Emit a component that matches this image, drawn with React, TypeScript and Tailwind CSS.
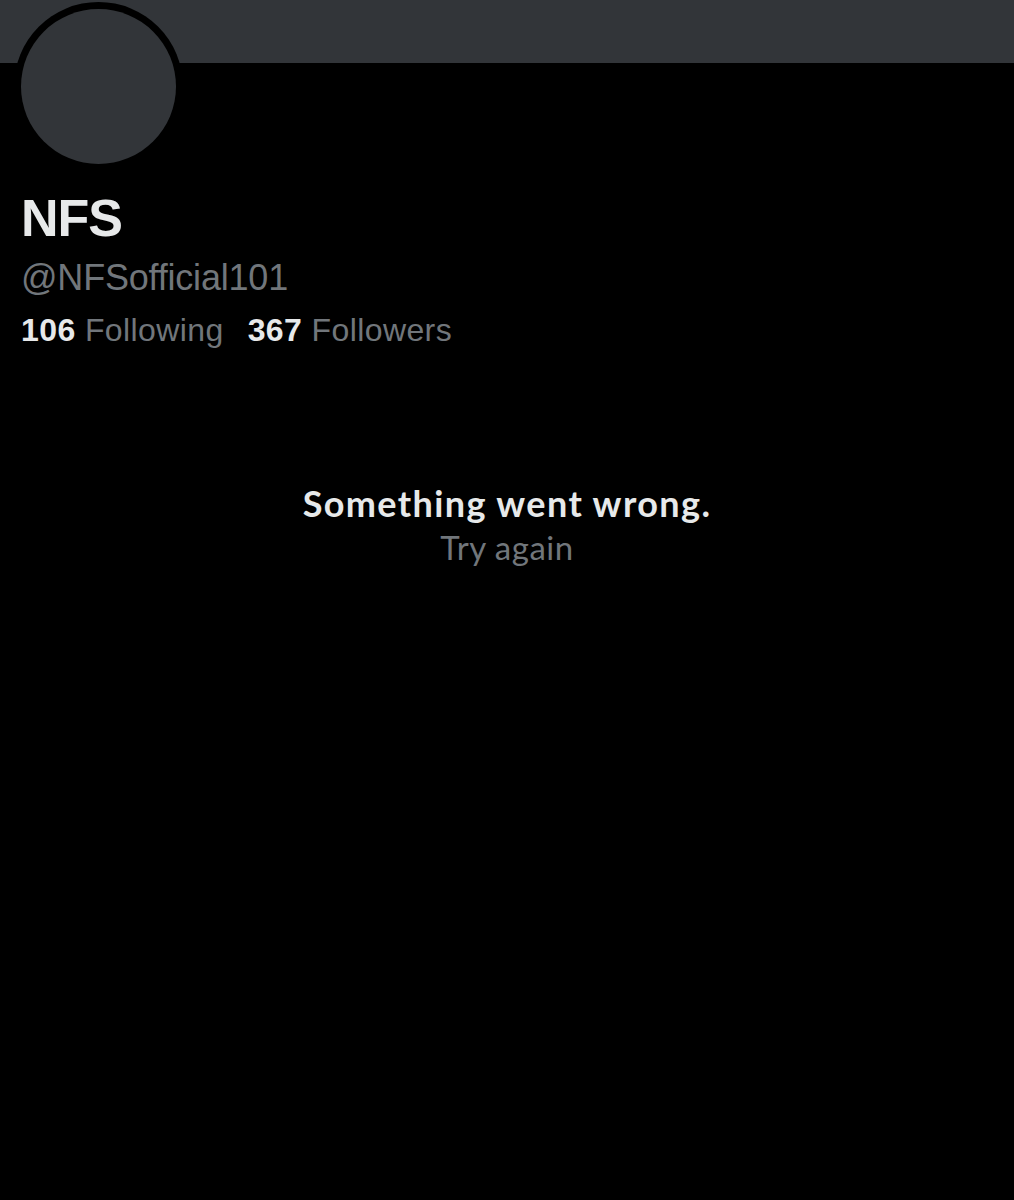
export default function App() {
  return (
    <div className="min-h-[1200px] w-full bg-black font-['Liberation_Sans',Arial,sans-serif]">
      {/* banner */}
      <div className="h-[63px] w-full bg-[#323539]" />

      {/* avatar */}
      <div className="-mt-[61px] ml-[14px] h-[169px] w-[169px] rounded-full bg-black p-[7px]">
        <div className="h-full w-full rounded-full bg-[#323539]" />
      </div>

      {/* profile info */}
      <div className="px-[21px]">
        <h1 className="mt-[17px] text-[52px] font-bold leading-[60px] tracking-[-1px] text-[#e7e9ea]">
          NFS
        </h1>
        <div className="mt-[6px] text-[36px] leading-[48px] tracking-[-0.2px] text-[#71767b]">
          @NFSofficial101
        </div>
        <div className="mt-[8px] flex gap-[24px] text-[32px] leading-[40px] tracking-[0.4px] text-[#71767b]">
          <span>
            <span className="font-bold text-[#e7e9ea]">106</span> Following
          </span>
          <span>
            <span className="font-bold text-[#e7e9ea]">367</span> Followers
          </span>
        </div>
      </div>

      {/* error state */}
      <div className="mt-[130px] flex flex-col items-center font-['Lato',sans-serif]">
        <div className="text-[36px] font-bold leading-[46px] tracking-[1.4px] text-[#e7e9ea]">
          Something went wrong.
        </div>
        <button className="text-[33px] leading-[42px] tracking-[0.5px] text-[#71767b]">Try again</button>
      </div>
    </div>
  );
}
